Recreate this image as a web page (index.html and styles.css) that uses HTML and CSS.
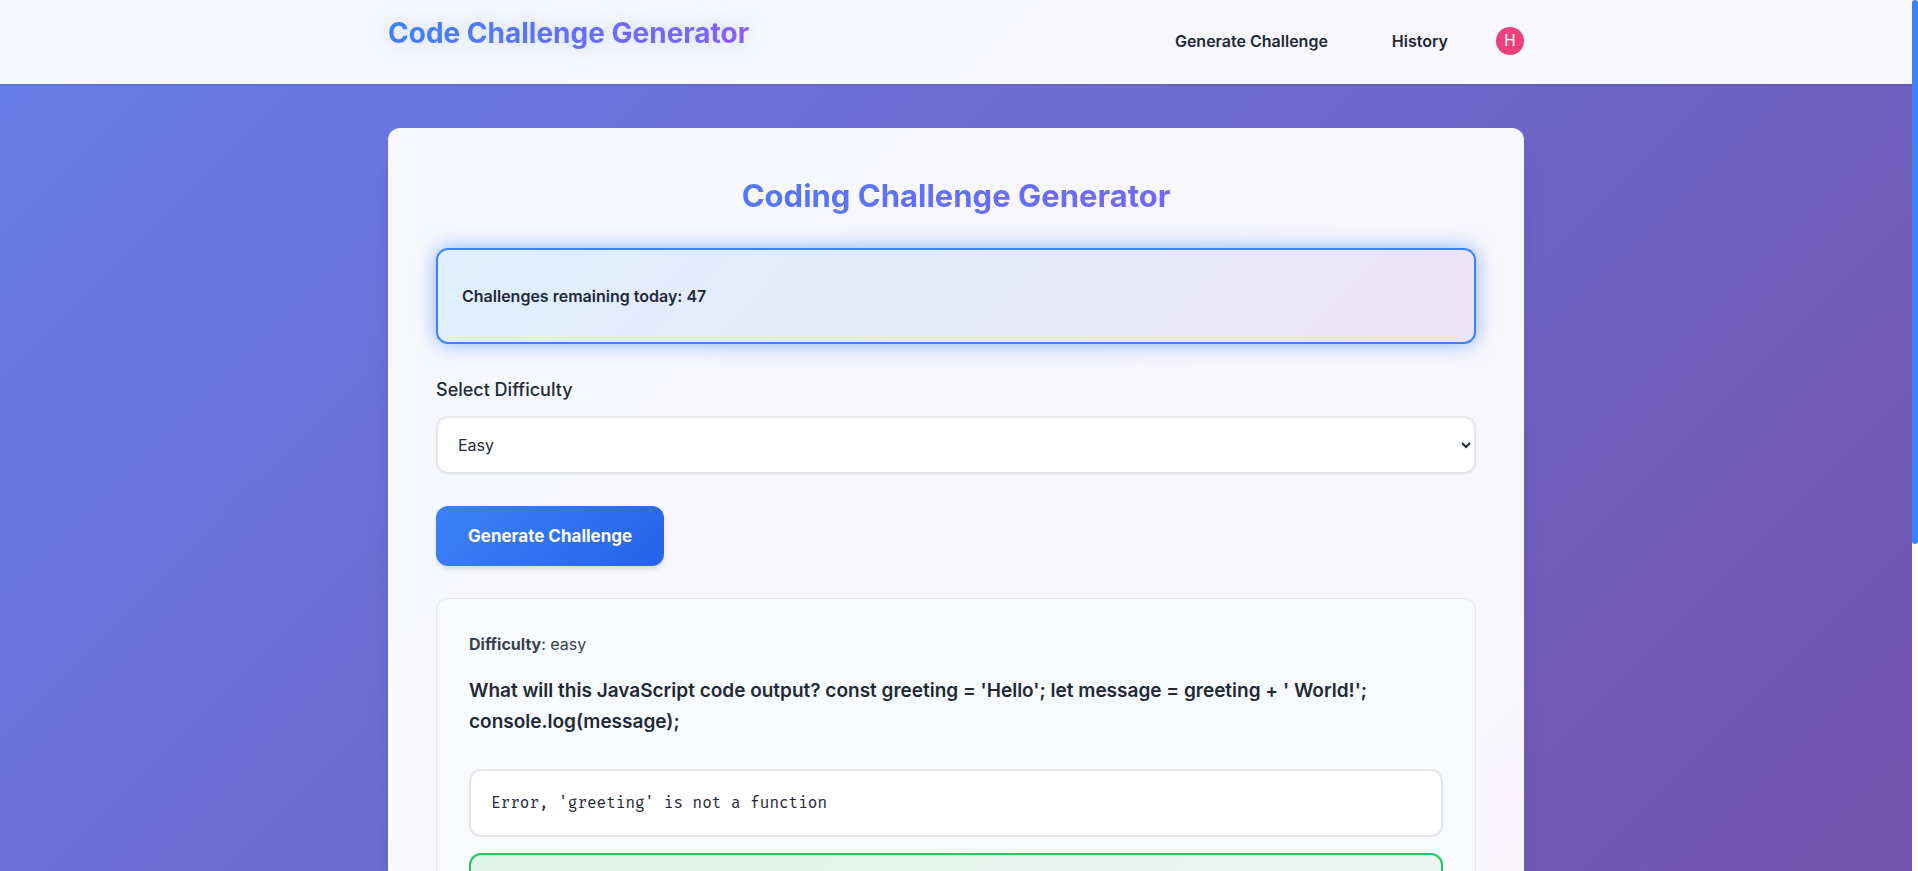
FILE: index.html
```html
<!DOCTYPE html>
<html lang="en">
<head>
<meta charset="utf-8">
<meta name="viewport" content="width=device-width, initial-scale=1">
<title>Code Challenge Generator</title>
<link rel="stylesheet" href="styles.css">
</head>
<body>
<div class="shell">
  <div class="page">
    <header class="app-header">
      <div class="header-inner">
        <h1 class="brand">Code Challenge Generator</h1>
        <nav class="nav">
          <a class="nav-link" href="#generate">Generate Challenge</a>
          <a class="nav-link" href="#history">History</a>
          <button class="avatar" type="button" aria-label="Open user menu">H</button>
        </nav>
      </div>
    </header>
    <main class="main">
      <section class="card" id="generate">
        <h2 class="title">Coding Challenge Generator</h2>
        <div class="quota"><p class="quota-text">Challenges remaining today: 47</p></div>
        <div class="field">
          <label class="label" for="difficulty">Select Difficulty</label>
          <select class="select" id="difficulty">
            <option>Easy</option>
            <option>Medium</option>
            <option>Hard</option>
          </select>
        </div>
        <button class="generate" type="button">Generate Challenge</button>
        <article class="challenge">
          <p class="difficulty"><strong>Difficulty</strong>: easy</p>
          <p class="question">What will this JavaScript code output? const greeting = 'Hello'; let message = greeting + ' World!'; console.log(message);</p>
          <div class="options">
            <button class="option" type="button">Error, 'greeting' is not a function</button>
            <button class="option option-correct" type="button"></button>
          </div>
        </article>
      </section>
    </main>
  </div>
  <div class="track" aria-hidden="true"><div class="thumb"></div></div>
</div>
</body>
</html>
```

FILE: styles.css
```css
*,
*::before,
*::after {
  box-sizing: border-box;
}

body {
  margin: 0;
  font-family: Inter, "Liberation Sans", sans-serif;
  font-size: 16px;
  line-height: 24px;
  color: #1f2937;
}

h1,
h2,
p {
  margin: 0;
}

button,
select {
  font: inherit;
  color: inherit;
}

.shell {
  display: grid;
  grid-template-columns: 1fr 6px;
  height: 100vh;
  overflow: hidden;
}

.page {
  min-width: 0;
  overflow: hidden;
  background: linear-gradient(135deg, #667eea 0%, #764ba2 100%) 0 0 / 100% 160vh no-repeat;
}

.app-header {
  background: rgba(255, 255, 255, 0.95);
  box-shadow: 0 1px 3px rgba(0, 0, 0, 0.1);
}

.header-inner {
  display: flex;
  justify-content: space-between;
  max-width: 1200px;
  margin: 0 auto;
  padding: 16px 32px 18px;
}

.brand {
  margin-bottom: 16px;
  font-size: 28px;
  line-height: 34px;
  font-weight: 700;
  background: linear-gradient(135deg, #3b82f6, #8b5cf6);
  background-clip: text;
  -webkit-background-clip: text;
  color: transparent;
  filter: drop-shadow(0 0 10px rgba(59, 130, 246, 0.3));
}

.nav {
  display: flex;
  align-items: center;
  gap: 16px;
}

.nav-link {
  padding: 8px 24px;
  font-weight: 600;
  color: inherit;
  text-decoration: none;
}

.avatar {
  width: 28px;
  height: 28px;
  margin-left: 8px;
  padding: 0;
  border: 0;
  border-radius: 50%;
  background: #ec407a;
  color: #fff;
  font-family: Roboto, sans-serif;
  line-height: 28px;
  font-weight: 400;
}

.main {
  max-width: 1200px;
  margin: 0 auto;
  padding: 44px 32px;
}

.card {
  padding: 48px;
  border-radius: 12px;
  background: rgba(255, 255, 255, 0.95);
  box-shadow: 0 20px 25px -5px rgba(0, 0, 0, 0.1), 0 10px 10px -5px rgba(0, 0, 0, 0.04);
}

.title {
  margin-bottom: 32px;
  font-size: 31px;
  line-height: 40px;
  font-weight: 700;
  text-align: center;
  background: linear-gradient(135deg, #3b82f6, #8b5cf6);
  background-clip: text;
  -webkit-background-clip: text;
  color: transparent;
}

.quota {
  margin-bottom: 32px;
  padding: 34px 24px;
  border: 2px solid #3b82f6;
  border-radius: 12px;
  background: linear-gradient(135deg, #e0efff, #ede4fa);
  box-shadow: 0 0 20px rgba(59, 130, 246, 0.6);
}

.quota-text {
  font-weight: 600;
}

.field {
  display: grid;
  gap: 12px;
  margin-bottom: 32px;
}

.label {
  font-size: 18px;
  line-height: 28px;
  font-weight: 500;
}

.select {
  width: 100%;
  height: 58px;
  padding: 0 16px;
  border: 2px solid #e5e7eb;
  border-radius: 12px;
  background: #fff;
  box-shadow: 0 1px 2px rgba(0, 0, 0, 0.05);
}

.generate {
  display: block;
  margin-bottom: 32px;
  padding: 16px 32px;
  border: 0;
  border-radius: 12px;
  background: linear-gradient(135deg, #3b82f6, #2563eb);
  box-shadow: 0 4px 6px -1px rgba(0, 0, 0, 0.1), 0 2px 4px -1px rgba(0, 0, 0, 0.06);
  color: #fff;
  font-size: 17px;
  line-height: 28px;
  font-weight: 700;
}

.challenge {
  padding: 32px;
  border: 1px solid #e5e7eb;
  border-radius: 12px;
  background: #f8fafd;
}

.difficulty {
  margin-bottom: 18px;
  line-height: 26px;
  color: #374151;
}

.question {
  margin-bottom: 32px;
  font-size: 19px;
  line-height: 31px;
  font-weight: 600;
}

.options {
  display: grid;
  gap: 16px;
}

.option {
  min-height: 68px;
  padding: 20px;
  border: 2px solid #e5e7eb;
  border-radius: 12px;
  background: #fff;
  font-family: "Fira Mono", "Fira Code", monospace;
  text-align: left;
}

.option-correct {
  border-color: #22c55e;
  background: linear-gradient(135deg, #e0f4ea, #eef5f3);
}

.track {
  background: #f8fafc;
}

.thumb {
  height: 62.5%;
  border-radius: 3px;
  background: #3b82f6;
}
```
